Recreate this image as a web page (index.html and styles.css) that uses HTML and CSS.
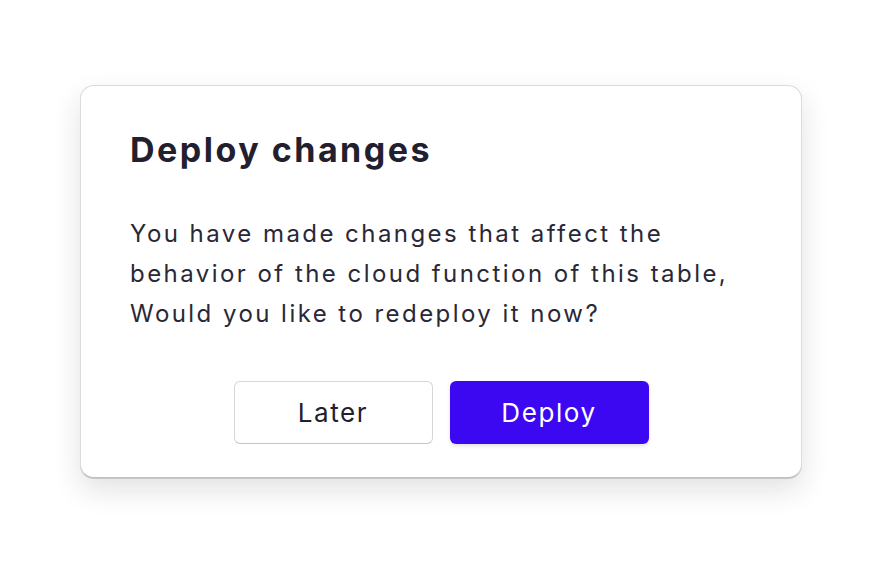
FILE: index.html
```html
<!DOCTYPE html>
<html>
<head>
<meta charset="utf-8">
<link rel="stylesheet" href="styles.css">
</head>
<body>
<div class="screen">
  <div class="dialog">
    <h1 class="title">Deploy changes</h1>
    <p class="message">You have made changes that affect the<br>behavior of the cloud function of this table,<br>Would you like to redeploy it now?</p>
    <div class="actions">
      <button class="btn btn-secondary">Later</button>
      <button class="btn btn-primary">Deploy</button>
    </div>
  </div>
</div>
</body>
</html>
```
FILE: styles.css
```css
* { box-sizing: border-box; }
html, body { margin: 0; padding: 0; background: #ffffff; }
.screen {
  width: 882px;
  height: 562px;
  display: flex;
  align-items: center;
  justify-content: center;
  font-family: Inter, "Noto Sans", sans-serif;
}
.dialog {
  width: 722px;
  height: 393px;
  background: #fff;
  border: 1px solid #dcdcdf;
  border-bottom-color: #c2c2c6;
  border-radius: 14px;
  box-shadow: 0 1px 0 #c6c6ca, 0 12px 28px rgba(30, 30, 40, 0.13);
  padding: 38px 49px 0;
}
.title {
  margin: 0;
  font-size: 34px;
  font-weight: 700;
  color: #22202e;
  line-height: 52px;
  letter-spacing: 2.5px;
}
.message {
  margin: 38px 0 0;
  font-size: 24px;
  line-height: 40px;
  color: #2a2836;
  letter-spacing: 2.45px;
}
.actions {
  margin-top: 47px;
  display: flex;
  justify-content: center;
  gap: 17px;
}
.btn {
  width: 199px;
  height: 63px;
  border-radius: 6px;
  font-family: Inter, "Noto Sans", sans-serif;
  font-size: 26px;
  letter-spacing: 1.6px;
}
.btn-secondary {
  background: #fff;
  color: #22202e;
  border: 1.5px solid #d6d6da;
  border-bottom-color: #c4c4c8;
}
.btn-primary {
  background: #3c08f2;
  color: #fff;
  border: none;
  box-shadow: 0 2px 4px rgba(0, 0, 0, 0.12);
}
```
